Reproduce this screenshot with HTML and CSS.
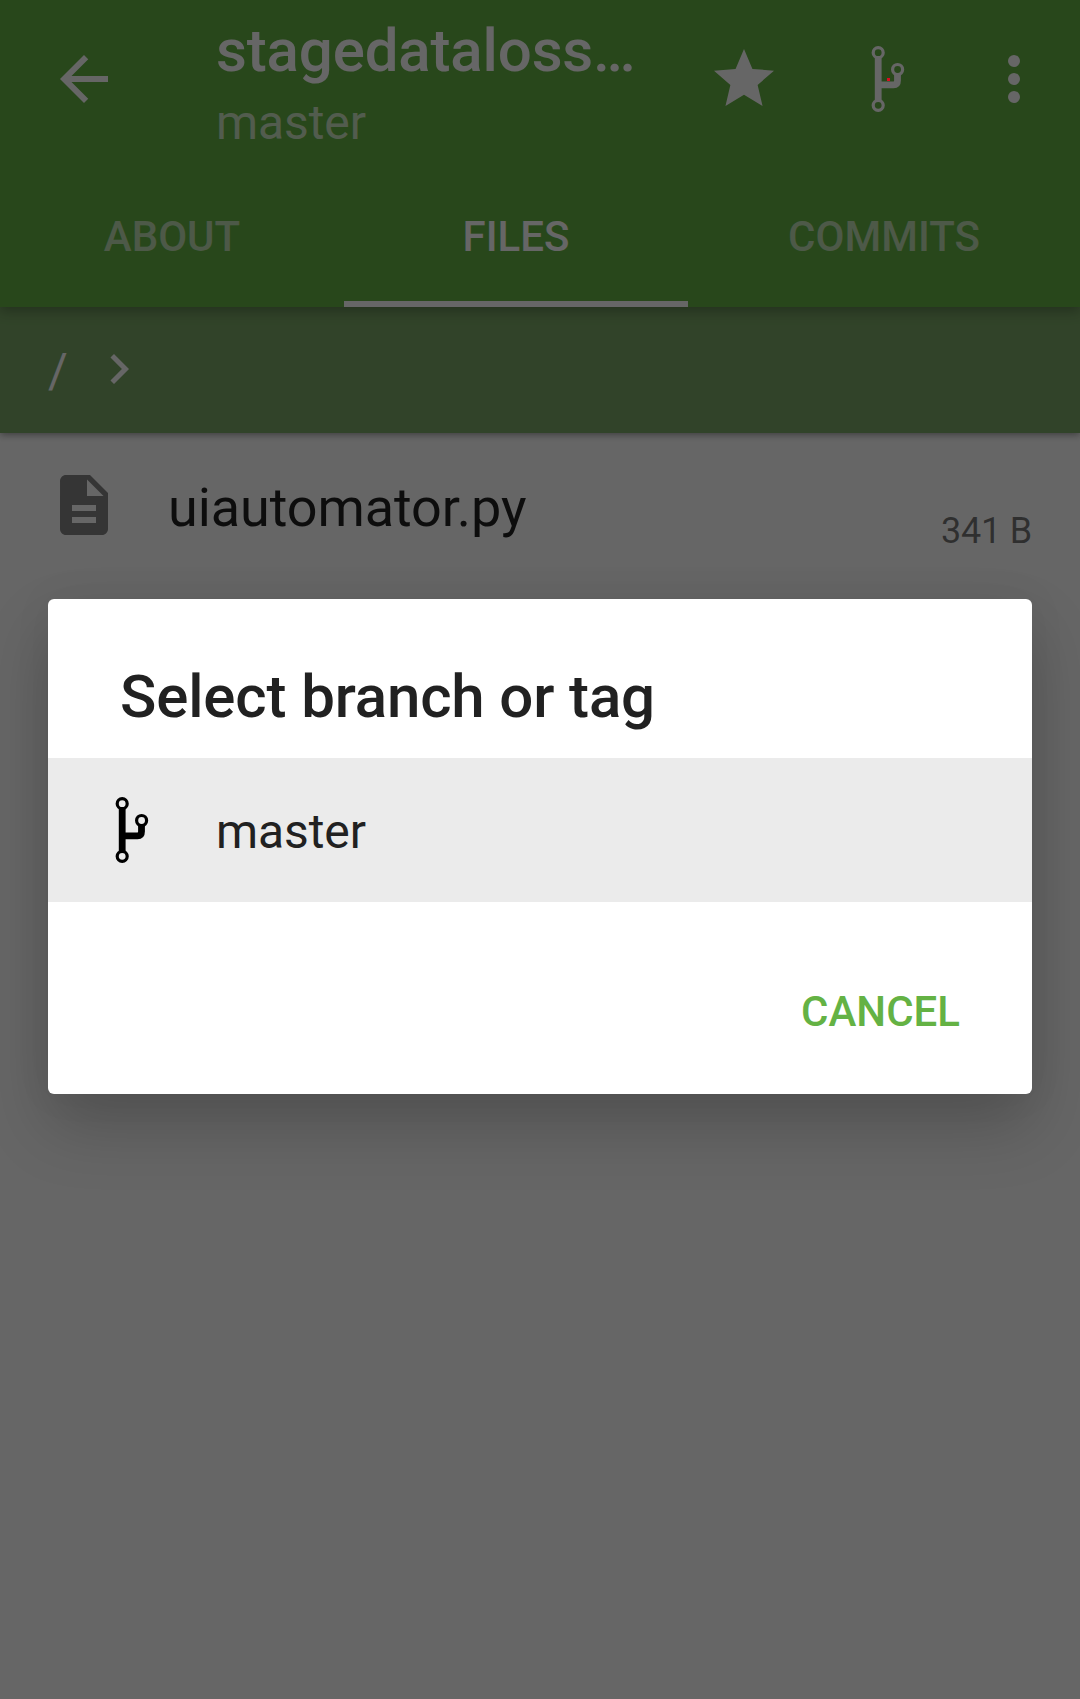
FILE: index.html
```html
<!DOCTYPE html>
<html lang="en">
<head>
<meta charset="utf-8">
<title>Select branch or tag</title>
<link rel="stylesheet" href="styles.css">
</head>
<body>
<svg class="defs" width="0" height="0">
  <symbol id="branch" viewBox="0 0 72 72">
    <g fill="none" stroke="currentColor">
      <path stroke-width="6.8" d="M26.2 15V57M26.2 41.8H41.5Q45.5 41.8 45.5 37.5V32"/>
      <circle cx="26.2" cy="9.7" r="5" stroke-width="3.2"/>
      <circle cx="26.2" cy="62.3" r="5" stroke-width="3.2"/>
      <circle cx="45.6" cy="26.5" r="5" stroke-width="3.2"/>
    </g>
  </symbol>
</svg>
<div class="screen">
  <header class="appbar">
    <div class="toolbar">
      <svg class="icon" viewBox="0 0 24 24"><path d="M20 11H7.83l5.59-5.59L12 4l-8 8 8 8 1.41-1.41L7.83 13H20v-2z"/></svg>
      <div class="titles">
        <h1 class="title">stagedataloss…</h1>
        <p class="subtitle">master</p>
      </div>
      <div class="actions">
        <svg class="icon" viewBox="0 0 24 24"><path d="M12 17.27L18.18 21l-1.64-7.03L22 9.24l-7.19-.61L12 2 9.19 8.63 2 9.24l5.46 4.73L5.82 21z"/></svg>
        <svg class="icon action-branch"><use href="#branch"/></svg>
        <svg class="icon" viewBox="0 0 24 24"><circle cx="12" cy="6" r="2"/><circle cx="12" cy="12" r="2"/><circle cx="12" cy="18" r="2"/></svg>
      </div>
    </div>
    <nav class="tabs">
      <span class="tab">ABOUT</span>
      <span class="tab active">FILES</span>
      <span class="tab">COMMITS</span>
    </nav>
  </header>
  <div class="path">
    <span class="root">/</span>
    <svg class="chevron" viewBox="0 0 24 24"><path d="M10 6L8.59 7.41 13.17 12l-4.58 4.59L10 18l6-6z"/></svg>
  </div>
  <main class="file">
    <svg class="file-icon" viewBox="0 0 24 24"><path d="M14 2H6c-1.1 0-1.99.9-1.99 2L4 20c0 1.1.89 2 1.99 2H18c1.1 0 2-.9 2-2V8l-6-6zm2 16H8v-2h8v2zm0-4H8v-2h8v2zm-3-5V3.5L18.5 9H13z"/></svg>
    <span class="file-name">uiautomator.py</span>
    <span class="file-size">341 B</span>
  </main>
</div>
<div class="scrim">
  <i class="dot"></i>
  <section class="dialog">
    <h2 class="dialog-title">Select branch or tag</h2>
    <div class="option">
      <svg class="option-icon"><use href="#branch"/></svg>
      <span class="option-name">master</span>
    </div>
    <div class="buttons"><span class="cancel">CANCEL</span></div>
  </section>
</div>
</body>
</html>
```
FILE: styles.css
```css
* { box-sizing: border-box; margin: 0; padding: 0; }
body {
  width: 1080px;
  height: 1699px;
  overflow: hidden;
  background: #fff;
  font-family: Roboto, sans-serif;
  font-weight: 400;
}
svg { display: block; flex: none; }
.defs { position: absolute; }
.screen { height: 1699px; overflow: hidden; }

.appbar {
  position: relative;
  z-index: 2;
  height: 307px;
  background: #64b244;
  color: #fff;
  box-shadow: 0 4px 12px rgba(0, 0, 0, .28);
}
.toolbar { display: flex; height: 163px; padding: 16px 30px 0 48px; }
.icon { width: 72px; height: 72px; margin-top: 27px; fill: currentColor; }
.titles { flex: 1; margin-left: 96px; }
.title { font-size: 60px; line-height: 70px; font-weight: 500; letter-spacing: -.14px; white-space: nowrap; }
.subtitle { margin-top: 9px; font-size: 48px; line-height: 56px; letter-spacing: -.1px; color: rgba(255, 255, 255, .7); }
.actions { display: flex; }
.action-branch { margin-left: 72px; margin-right: 54px; }

.tabs { display: grid; grid-template-columns: 344px 344px 1fr; height: 144px; }
.tab {
  padding-top: 3px;
  font-size: 42px;
  font-weight: 500;
  line-height: 141px;
  text-align: center;
  color: rgba(255, 255, 255, .6);
}
.tab.active { color: #fff; box-shadow: inset 0 -6px #fff; }

.path {
  position: relative;
  z-index: 1;
  display: flex;
  align-items: center;
  height: 126px;
  padding: 0 48px 3px;
  background: #7aa866;
  color: #fff;
  box-shadow: 0 2px 7px rgba(0, 0, 0, .38);
}
.root { width: 41px; font-size: 48px; line-height: 56px; padding-top: 4px; }
.chevron { width: 60px; height: 60px; fill: currentColor; }

.file { display: flex; align-items: center; height: 144px; padding: 0 48px; }
.file-icon { width: 72px; height: 72px; fill: #858585; }
.file-name { flex: 1; margin-left: 48px; padding-top: 6px; font-size: 54px; line-height: 64px; letter-spacing: -.08px; color: rgba(0, 0, 0, .87); }
.file-size { padding-top: 52px; font-size: 36px; line-height: 42px; letter-spacing: -.2px; color: rgba(0, 0, 0, .54); }

.scrim {
  position: absolute;
  z-index: 3;
  inset: 0;
  height: 1699px;
  padding: 599px 48px 0;
  overflow: hidden;
  background: rgba(0, 0, 0, .6);
}
.dot {
  position: absolute;
  left: 887px;
  top: 78px;
  width: 3px;
  height: 3px;
  background: #d90d20;
}
.dialog {
  height: 495px;
  border-radius: 6px;
  background: #fff;
  color: #212121;
  box-shadow: 0 32px 66px rgba(0, 0, 0, .2), 0 0 40px rgba(0, 0, 0, .05);
}
.dialog-title { height: 159px; padding: 63px 72px 0; font-size: 60px; line-height: 70px; font-weight: 500; letter-spacing: -.14px; }
.option { display: flex; align-items: center; height: 144px; padding-left: 48px; background: #ebebeb; }
.option-icon { width: 72px; height: 72px; color: #000; }
.option-name { margin-left: 48px; padding-top: 4px; font-size: 48px; line-height: 56px; letter-spacing: -.1px; }
.buttons { display: flex; justify-content: flex-end; padding: 85px 72px 0 0; }
.cancel { font-size: 42px; line-height: 49px; font-weight: 500; color: #64b244; }
```
